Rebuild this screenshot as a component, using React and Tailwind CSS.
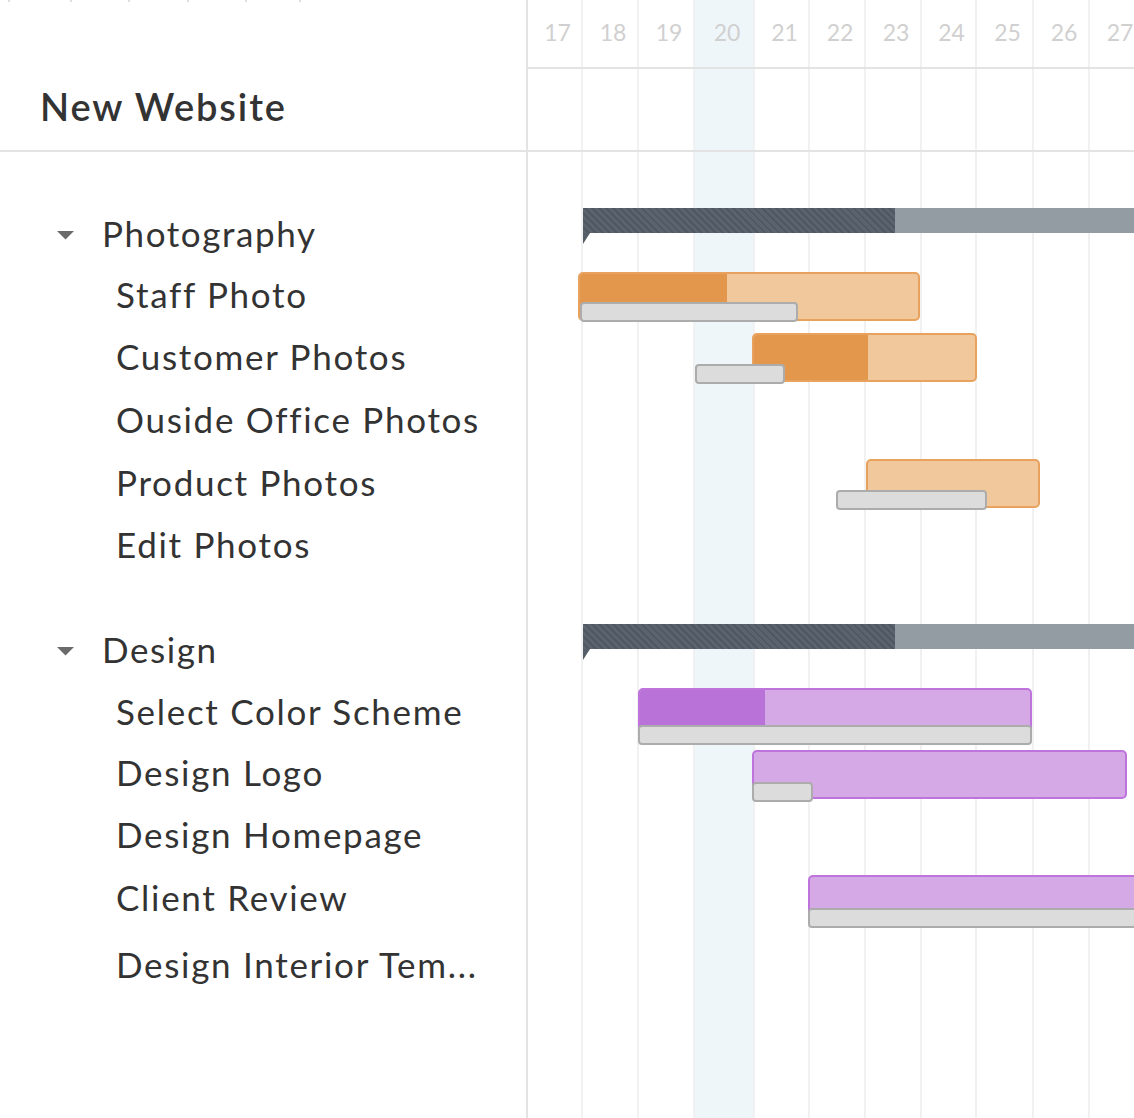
import React from "react";

const days = [
  { d: 17, w: "w-[55px]" },
  { d: 18, w: "w-[56px]" },
  { d: 19, w: "w-[56px]" },
  { d: 20, w: "w-[60px]", hl: true },
  { d: 21, w: "w-[55px]" },
  { d: 22, w: "w-[56px]" },
  { d: 23, w: "w-[56px]" },
  { d: 24, w: "w-[55px]" },
  { d: 25, w: "w-[57px]" },
  { d: 26, w: "w-[56px]" },
  { d: 27, w: "w-[56px]" },
];

const palette = {
  orange: { box: "border-[#e9a25e] bg-[#f1c89c]", fill: "bg-[#e3974d]" },
  purple: { box: "border-[#bf74dd] bg-[#d5a9e6]", fill: "bg-[#b972d8]" },
};

const rows = [
  { kind: "group", label: "Photography", h: "h-[62px]", mt: "mt-[52px]" },
  {
    kind: "task", label: "Staff Photo", h: "h-[60px]",
    bar: { c: "orange", left: 50, width: 342, done: 147, top: 6 },
    grey: { left: 52, width: 218, top: 36 },
  },
  {
    kind: "task", label: "Customer Photos", h: "h-[63px]",
    bar: { c: "orange", left: 224, width: 225, done: 114, top: 7 },
    grey: { left: 167, width: 90, top: 38 },
  },
  { kind: "task", label: "Ouside Office Photos", h: "h-[63px]" },
  {
    kind: "task", label: "Product Photos", h: "h-[63px]",
    bar: { c: "orange", left: 338, width: 174, done: 0, top: 7 },
    grey: { left: 308, width: 151, top: 38 },
  },
  { kind: "task", label: "Edit Photos", h: "h-[62px]" },
  { kind: "group", label: "Design", h: "h-[62px]", mt: "mt-[43px]" },
  {
    kind: "task", label: "Select Color Scheme", h: "h-[61px]",
    bar: { c: "purple", left: 110, width: 394, done: 125, top: 6 },
    grey: { left: 110, width: 394, top: 43 },
  },
  {
    kind: "task", label: "Design Logo", h: "h-[62px]",
    bar: { c: "purple", left: 224, width: 375, done: 0, top: 7 },
    grey: { left: 224, width: 61, top: 39 },
  },
  { kind: "task", label: "Design Homepage", h: "h-[62px]" },
  {
    kind: "task", label: "Client Review", h: "h-[63px]",
    bar: { c: "purple", left: 280, width: 420, done: 0, top: 8 },
    grey: { left: 280, width: 420, top: 41 },
  },
  { kind: "task", label: "Design Interior Tem...", h: "h-[72px]" },
];

function Caret() {
  return (
    <svg width="17" height="9" viewBox="0 0 17 9" className="shrink-0">
      <polygon points="0,0 17,0 8.5,8.5" fill="#6b6b6b" />
    </svg>
  );
}

function GroupBar() {
  return (
    <div className="absolute left-[55px] top-[4px] flex">
      <div className="relative">
        <div className="h-[25px] w-[312px] bg-[repeating-linear-gradient(45deg,#5b646e_0px,#5b646e_3px,#4f5862_3px,#4f5862_5px)]" />
        <svg width="7" height="11" viewBox="0 0 7 11" className="absolute left-0 top-[25px]">
          <polygon points="0,0 7,0 0,11" fill="#555e68" />
        </svg>
      </div>
      <div className="h-[25px] w-[320px] bg-[#939ba3]" />
    </div>
  );
}

function TaskBar({ bar, grey }) {
  const p = palette[bar.c];
  return (
    <>
      <div
        className={`absolute h-[49px] rounded-[5px] border-2 overflow-hidden ${p.box}`}
        style={{ left: bar.left, width: bar.width, top: bar.top }}
      >
        {bar.done > 0 && (
          <div className={`h-full ${p.fill}`} style={{ width: bar.done }} />
        )}
      </div>
      <div
        className="absolute h-[20px] rounded-[4px] border-2 border-[#acacac] bg-[#dcdcdc]"
        style={{ left: grey.left, width: grey.width, top: grey.top }}
      />
    </>
  );
}

export default function App() {
  return (
    <div className="relative w-[1134px] h-[1118px] overflow-hidden bg-white flex [font-family:Lato,'Open_Sans',sans-serif] text-[#333333]">
      {/* top edge ticks */}
      <div className="absolute left-0 top-0 flex">
        {[8, 70, 128, 187, 245, 299].map((x) => (
          <div key={x} className="absolute top-0 h-[2px] w-[2px] bg-[#dddddd]" style={{ left: x }} />
        ))}
      </div>

      {/* Left panel */}
      <div className="w-[528px] shrink-0 border-r-2 border-[#e3e3e3] flex flex-col">
        <div className="h-[152px] border-b-2 border-[#e3e3e3] flex items-end pl-[40px] pb-[25px]">
          <div className="text-[38px] font-semibold leading-none tracking-[1.9px] text-[#333333]">New Website</div>
        </div>
        <div className="flex flex-col">
          {rows.map((r, i) => (
            <div key={i} className={`${r.h} ${r.mt || ""} flex items-center`}>
              {r.kind === "group" ? (
                <div className="flex items-center pl-[57px] gap-[28px]">
                  <Caret />
                  <span className="text-[35px] leading-none tracking-[1.6px] -mt-[3px]">{r.label}</span>
                </div>
              ) : (
                <span className="pl-[116px] text-[35px] leading-none tracking-[1.7px] whitespace-nowrap -mt-[3px]">{r.label}</span>
              )}
            </div>
          ))}
        </div>
      </div>

      {/* Right chart */}
      <div className="relative flex-1 overflow-hidden">
        {/* grid background */}
        <div className="absolute inset-0 flex">
          {days.map((d) => (
            <div
              key={d.d}
              className={`${d.w} shrink-0 h-full border-r-2 border-[#f1f1f1] ${d.hl ? "bg-[#eef6fa]" : ""}`}
            />
          ))}
        </div>

        <div className="relative flex flex-col">
          {/* header */}
          <div className="h-[152px] border-b-2 border-[#e3e3e3] flex flex-col">
            <div className="h-[69px] border-b-2 border-[#e3e3e3] flex pb-[3px]">
              {days.map((d) => (
                <div
                  key={d.d}
                  className={`${d.w} shrink-0 flex items-center justify-center pl-[4px] text-[23px] text-[#d0d0d0]`}
                >
                  {d.d}
                </div>
              ))}
            </div>
          </div>

          {/* rows */}
          {rows.map((r, i) => (
            <div key={i} className={`${r.h} ${r.mt || ""} relative`}>
              {r.kind === "group" && <GroupBar />}
              {r.bar && <TaskBar bar={r.bar} grey={r.grey} />}
            </div>
          ))}
        </div>
      </div>
    </div>
  );
}
